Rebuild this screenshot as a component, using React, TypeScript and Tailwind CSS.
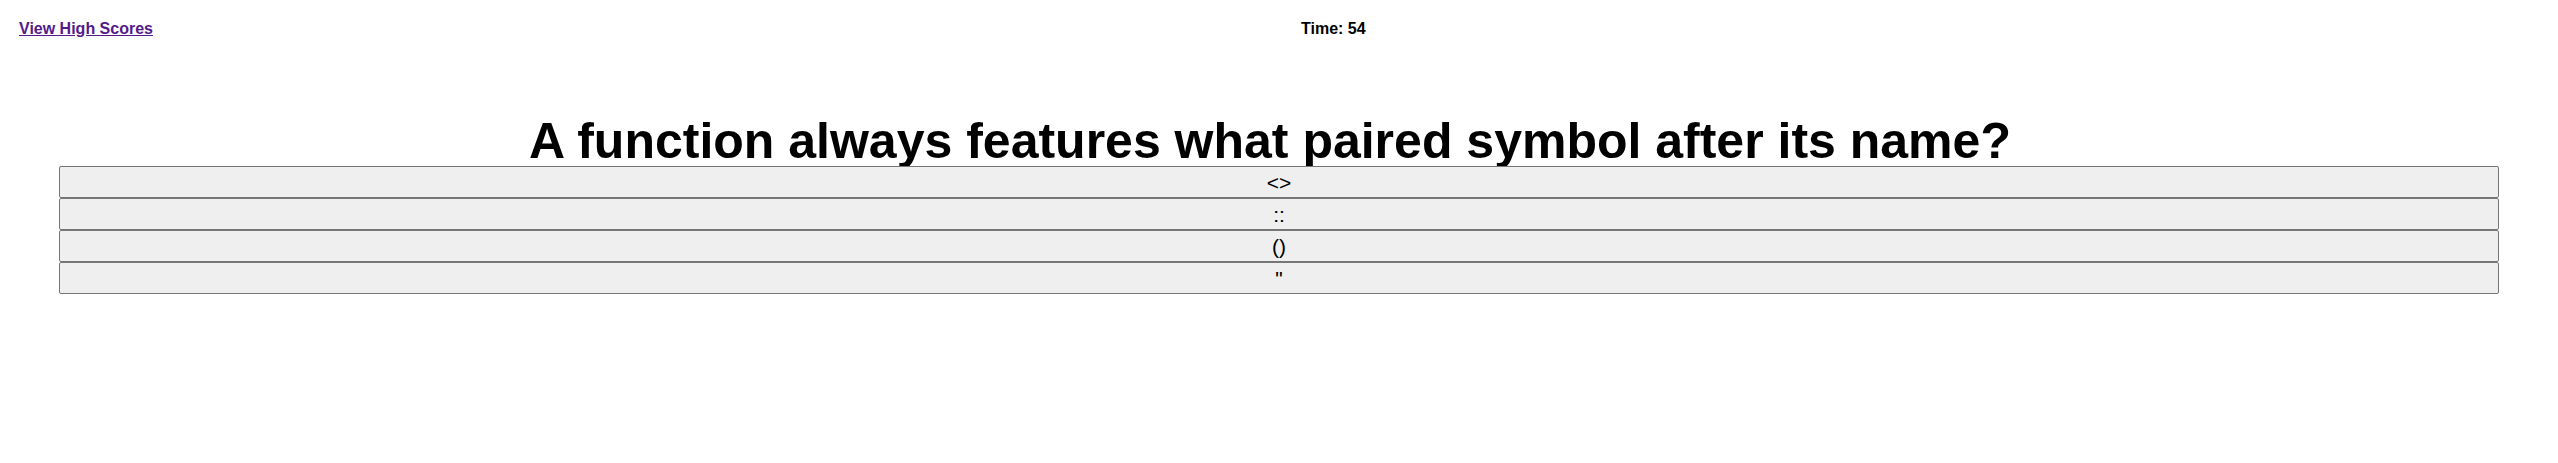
const answers = ["<>", "::", "()", "\""];

export default function App() {
  return (
    <div className="min-h-screen bg-white text-black font-['Liberation_Sans',Arial,sans-serif]">
      <header className="grid grid-cols-2 px-[19px] pt-[17px] h-[37px] text-base font-bold">
        <div>
          <a href="#" className="text-[#551a8b] underline">
            View High Scores
          </a>
        </div>
        <div className="pl-[22px]">Time: 54</div>
      </header>

      <h1 className="mt-[79px] pr-[18px] text-center text-[50px] leading-none font-bold">
        A function always features what paired symbol after its name?
      </h1>

      <div className="flex flex-col mx-[59px]">
        {answers.map((a) => (
          <button
            key={a}
            className="h-[32px] border border-[#767676] rounded-[2px] bg-[#efefef] text-[21px] leading-none text-black"
          >
            {a}
          </button>
        ))}
      </div>
    </div>
  );
}
